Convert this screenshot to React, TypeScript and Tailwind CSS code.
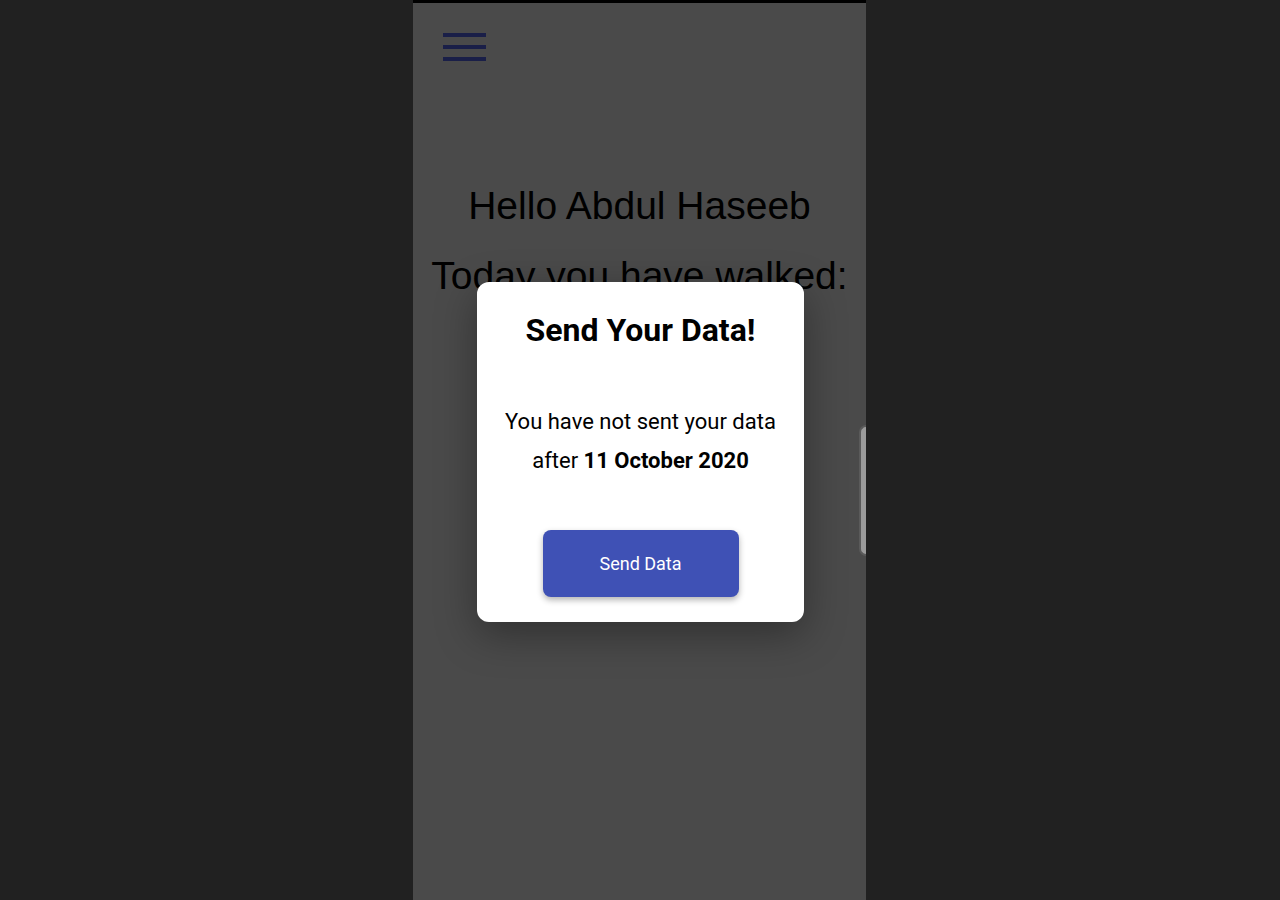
import React from "react";

export default function App() {
  return (
    <div className="w-[1280px] h-[900px] bg-[#212121] flex overflow-hidden pl-[413px]">
      <div className="relative w-[453px] h-[900px] flex flex-col">
        <div className="h-[3px] bg-black" />
        <div className="relative flex-1 bg-[#4a4a4a] flex flex-col">
          <div className="pl-[30px] pt-[30px] flex flex-col gap-[8px]">
            <div className="w-[43px] h-[4px] bg-[#1a1f48]" />
            <div className="w-[43px] h-[4px] bg-[#1a1f48]" />
            <div className="w-[43px] h-[4px] bg-[#1a1f48]" />
          </div>
          <div
            className="mt-[110px] flex flex-col items-center text-black text-[39px] leading-[70px]"
            style={{ fontFamily: '"Liberation Sans", Arial, sans-serif' }}
          >
            <div>Hello Abdul Haseeb</div>
            <div>Today you have walked:</div>
          </div>
          <div className="absolute right-0 top-[422px] w-[7px] h-[131px] rounded-l-[10px] bg-[#9b9b9b] border-l-2 border-y-2 border-[#5a5a5a]" />
          <div
            className="absolute left-[64px] top-[279px] w-[327px] h-[340px] bg-white rounded-[12px] shadow-[0_12px_40px_rgba(0,0,0,0.35)] flex flex-col items-center text-black"
            style={{ fontFamily: 'Roboto, "Noto Sans", sans-serif' }}
          >
            <div className="mt-[28px] text-[32px] font-bold leading-[40px]">Send Your Data!</div>
            <div className="mt-[52px] text-[22px] leading-[39px] text-center">
              <div>You have not sent your data</div>
              <div>
                after <span className="font-bold">11 October 2020</span>
              </div>
            </div>
            <button className="mt-[50px] w-[196px] h-[67px] rounded-[8px] bg-[#3f51b5] text-white text-[18px] shadow-[0_3px_6px_rgba(0,0,0,0.3)]">
              Send Data
            </button>
          </div>
        </div>
      </div>
    </div>
  );
}
